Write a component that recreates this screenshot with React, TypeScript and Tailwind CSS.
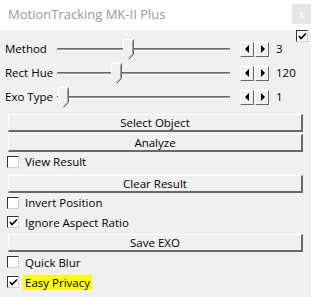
import React from "react";

const font = { fontFamily: "'Open Sans', 'Noto Sans', sans-serif" };

function CheckBox({ checked }: { checked?: boolean }) {
  return (
    <div className="relative shrink-0 size-[12px] bg-white border border-[#333333] border-r-[#d0d0d0] border-b-[#d0d0d0]">
      {checked && (
        <svg className="absolute left-[1px] top-[1px]" width="9" height="9" viewBox="0 0 9 9">
          <path d="M1 4 L3 6.5 L8 1.5" stroke="#000" strokeWidth="1.6" fill="none" />
        </svg>
      )}
    </div>
  );
}

function SliderThumb() {
  return (
    <svg width="11" height="21" viewBox="0 0 11 21" className="block">
      <path d="M0.5 0.5 H10.5 V15.5 L5.5 20.5 L0.5 15.5 Z" fill="#f0f0f0" />
      <path d="M0.5 15.5 V0.5 H10" stroke="#ffffff" fill="none" />
      <path d="M10.5 0.5 V15.5 L5.5 20.5" stroke="#696969" fill="none" />
      <path d="M9.5 1.5 V15 L5.5 19" stroke="#a0a0a0" fill="none" />
    </svg>
  );
}

function SpinButton({ dir }: { dir: "l" | "r" }) {
  return (
    <div className="flex items-center justify-center w-[14px] h-[15px] bg-[#f0f0f0] border-t border-l border-white border-r border-b border-r-[#696969] border-b-[#696969]">
      <svg width="5" height="8" viewBox="0 0 5 8">
        {dir === "l" ? <path d="M4 0 V8 L0 4 Z" fill="#000" /> : <path d="M1 0 V8 L5 4 Z" fill="#000" />}
      </svg>
    </div>
  );
}

function SliderRow({ label, value, pos }: { label: string; value: string; pos: number }) {
  return (
    <div className="flex items-center h-[24px]">
      <span className="w-[57px] pl-[5px] text-[11.5px] text-black leading-none whitespace-nowrap" style={font}>{label}</span>
      <div className="relative w-[173px] h-[24px] flex items-center">
        <div className="w-full h-[3px] bg-[#9a9a9a] border-t border-[#6d6d6d] border-b border-b-white" />
        <div className="absolute top-[2px]" style={{ left: pos }}>
          <SliderThumb />
        </div>
      </div>
      <div className="flex ml-[10px] gap-[1px]">
        <SpinButton dir="l" />
        <SpinButton dir="r" />
      </div>
      <span className="ml-[7px] text-[11.5px] text-black leading-none" style={font}>{value}</span>
    </div>
  );
}

function Btn({ label, className = "" }: { label: string; className?: string }) {
  return (
    <div
      className={`ml-[8px] w-[295px] h-[18px] flex items-center justify-center bg-[#f0f0f0] border-t border-l border-white border-r-2 border-b-2 border-r-[#696969] border-b-[#696969] text-[11.5px] text-black leading-none ${className}`}
      style={font}
    >
      {label}
    </div>
  );
}

function CheckRow({ label, checked, highlight, h }: { label: string; checked?: boolean; highlight?: boolean; h: string }) {
  return (
    <div className={`flex items-center pl-[7px] ${h}`}>
      <CheckBox checked={checked} />
      <span
        className={`ml-[4px] px-[2px] text-[11.5px] text-black leading-[15px] ${highlight ? "bg-[#ffff00]" : ""}`}
        style={font}
      >
        {label}
      </span>
    </div>
  );
}

export default function App() {
  return (
    <div className="w-[311px] h-[297px] bg-[#f0f0f0] flex flex-col overflow-hidden">
      <div className="h-[30px] bg-white flex items-start justify-between shrink-0">
        <span className="pl-[8px] pt-[5px] text-[13px] text-[#9a9a9a] leading-[18px]" style={font}>
          MotionTracking MK-II Plus
        </span>
        <div className="mt-[4px] w-[19px] h-[20px] bg-[#e6e6e6] flex items-center justify-center text-[10px] text-white leading-none" style={font}>
          x
        </div>
      </div>
      <div className="flex justify-end h-[7px] pr-[3px]">
        <CheckBox checked />
      </div>
      <SliderRow label="Method" value="3" pos={66} />
      <SliderRow label="Rect Hue" value="120" pos={54} />
      <SliderRow label="Exo Type" value="1" pos={1} />
      <Btn label="Select Object" className="mt-[5px]" />
      <Btn label="Analyze" className="mt-[2px]" />
      <CheckRow label="View Result" h="h-[19px]" />
      <Btn label="Clear Result" className="mt-[4px]" />
      <CheckRow label="Invert Position" h="h-[19px]" />
      <CheckRow label="Ignore Aspect Ratio" checked h="h-[20px]" />
      <Btn label="Save EXO" className="mt-[2px]" />
      <CheckRow label="Quick Blur" h="h-[20px]" />
      <CheckRow label="Easy Privacy" checked highlight h="h-[20px]" />
    </div>
  );
}
